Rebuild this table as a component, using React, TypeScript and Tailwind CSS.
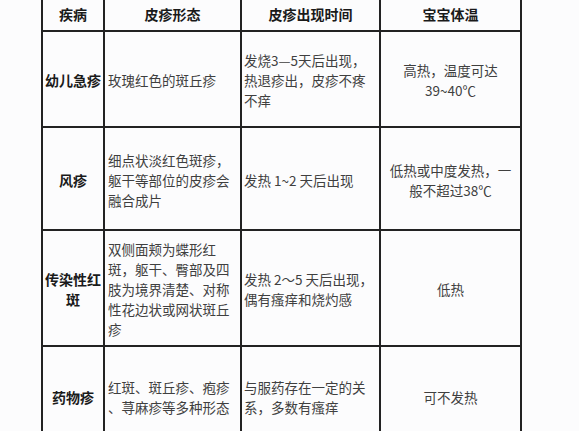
import React from "react";

const font = { fontFamily: '"Noto Sans CJK SC", "Noto Sans", sans-serif' };

type Cell = { lines: string[]; bold?: boolean; align: "left" | "center" };

const rows: { h: string; cells: Cell[] }[] = [
  {
    h: "h-[96px]",
    cells: [
      { lines: ["幼儿急疹"], bold: true, align: "center" },
      { lines: ["玫瑰红色的斑丘疹"], align: "left" },
      { lines: ["发烧3—5天后出现，", "热退疹出，皮疹不疼", "不痒"], align: "left" },
      { lines: ["高热，温度可达", "39~40℃"], align: "center" },
    ],
  },
  {
    h: "h-[103px]",
    cells: [
      { lines: ["风疹"], bold: true, align: "center" },
      { lines: ["细点状淡红色斑疹，", "躯干等部位的皮疹会", "融合成片"], align: "left" },
      { lines: ["发热 1~2 天后出现"], align: "left" },
      { lines: ["低热或中度发热，一", "般不超过38℃"], align: "center" },
    ],
  },
  {
    h: "h-[116px]",
    cells: [
      { lines: ["传染性红", "斑"], bold: true, align: "center" },
      {
        lines: ["双侧面颊为蝶形红", "斑，躯干、臀部及四", "肢为境界清楚、对称", "性花边状或网状斑丘", "疹"],
        align: "left",
      },
      { lines: ["发热 2～5 天后出现，", "偶有瘙痒和烧灼感"], align: "left" },
      { lines: ["低热"], align: "center" },
    ],
  },
  {
    h: "h-[100px]",
    cells: [
      { lines: ["药物疹"], bold: true, align: "center" },
      { lines: ["红斑、斑丘疹、疱疹", "、荨麻疹等多种形态"], align: "left" },
      { lines: ["与服药存在一定的关", "系，多数有瘙痒"], align: "left" },
      { lines: ["可不发热"], align: "center" },
    ],
  },
];

const widths = ["w-[62px]", "w-[137px]", "w-[139px]", "w-[141px]"];
const pads = ["px-[1px]", "pl-[3px]", "pl-[2px]", "px-[1px]"];

export default function App() {
  const headers = ["疾病", "皮疹形态", "皮疹出现时间", "宝宝体温"];
  return (
    <div className="w-[579px] h-[431px] overflow-hidden bg-[#fcfcfd]" style={font}>
      <div className="ml-[41px] w-[481px] border-l-2 border-[#222]">
        <div className="flex h-[32px]">
          {headers.map((t, i) => (
            <div
              key={i}
              className={`${widths[i]} shrink-0 border-r-2 border-b-2 border-[#222] flex items-center justify-center text-[14px] font-bold text-[#1a1a1a] pb-[2px]`}
            >
              {t}
            </div>
          ))}
        </div>
        {rows.map((r, ri) => (
          <div key={ri} className={`flex ${r.h}`}>
            {r.cells.map((c, ci) => (
              <div
                key={ci}
                className={`${widths[ci]} ${pads[ci]} shrink-0 border-r-2 border-b-2 border-[#222] flex flex-col justify-center pt-[2px] ${
                  c.align === "center" ? "items-center text-center" : "items-start text-left"
                } ${c.bold ? "font-bold text-[#1a1a1a] text-[14px]" : "text-[#3f3f3f] text-[13.5px]"} leading-[20px]`}
              >
                {c.lines.map((l, li) => (
                  <div key={li} className="whitespace-nowrap">
                    {l}
                  </div>
                ))}
              </div>
            ))}
          </div>
        ))}
      </div>
    </div>
  );
}
